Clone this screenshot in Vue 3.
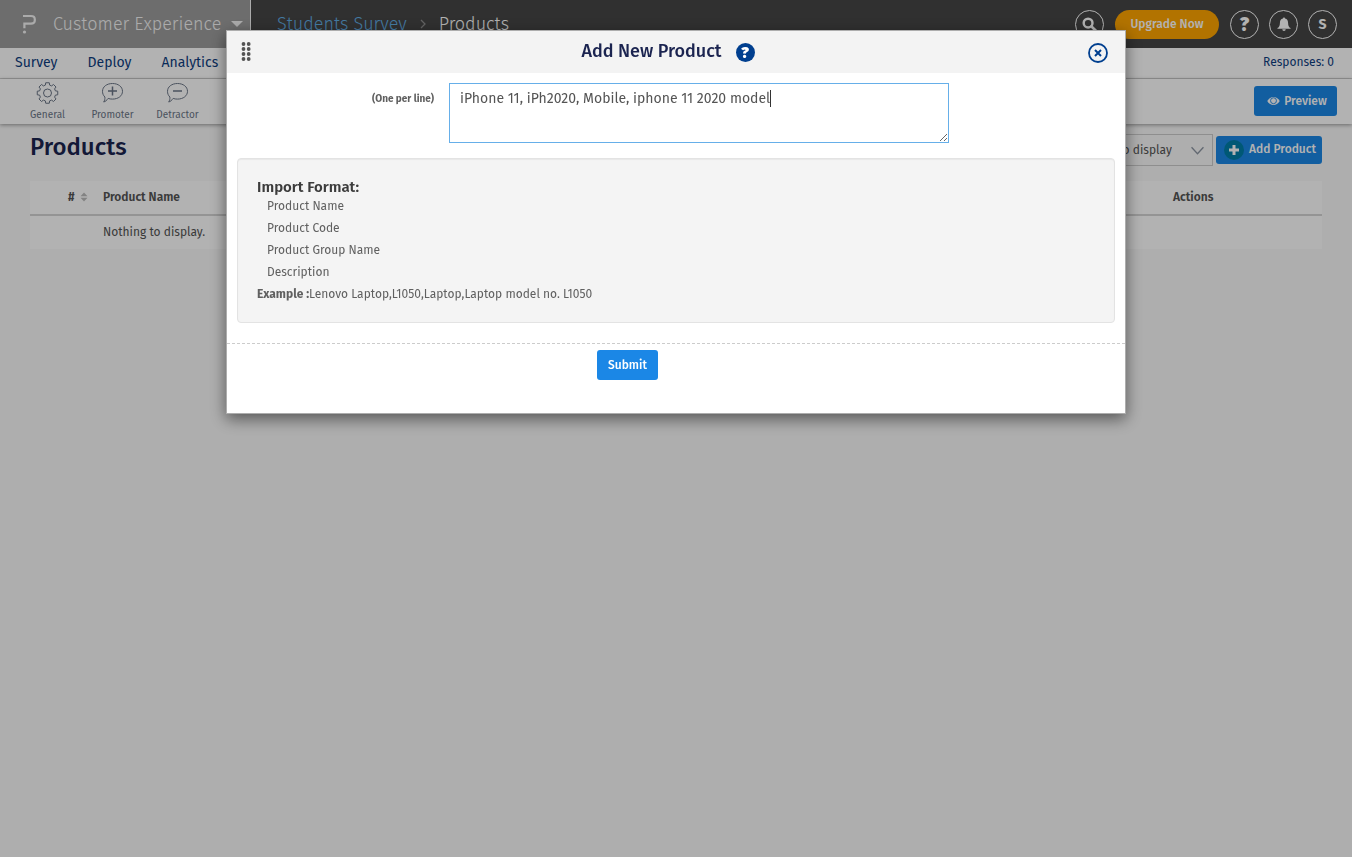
<template>
  <div class="page">
    <header class="topbar">
      <button type="button" class="brand">
        <svg class="brand-logo" viewBox="0 0 14 22" width="14" height="22">
          <path d="M1 3h8q3.800 0 3.800 3.300v1q0 3.300-3.800 3.300H2.400v4.700" fill="none" stroke="currentColor" stroke-width="2.200" />
          <circle cx="2.500" cy="19" r="1.600" fill="currentColor" />
        </svg>
        <span>Customer Experience</span>
        <span class="caret"></span>
      </button>
      <nav class="breadcrumb">
        <a href="#">Students Survey</a>
        <svg viewBox="0 0 6 10" width="6" height="10"><path d="M1 1l4 4-4 4" fill="none" stroke="#8d8d8d" stroke-width="1.300" /></svg>
        <span>Products</span>
      </nav>
      <div class="topbar-actions">
        <button type="button" class="circle" aria-label="Search">
          <svg viewBox="0 0 16 16" width="15" height="15">
            <circle cx="6.500" cy="6.500" r="4.700" fill="none" stroke="currentColor" stroke-width="2.600" />
            <path d="M10 10l4.500 4.500" stroke="currentColor" stroke-width="3" stroke-linecap="round" />
          </svg>
        </button>
        <button type="button" class="upgrade">Upgrade Now</button>
        <button type="button" class="circle help" aria-label="Help">?</button>
        <button type="button" class="circle" aria-label="Notifications">
          <svg viewBox="0 0 16 16" width="14" height="14">
            <path d="M8 0.500c0.700 0 1.200 0.500 1.200 1.300 2.500 0.600 3.500 2.500 3.500 5.200 0 3 1 4.500 2.800 5.700v0.800H0.500v-0.800c1.800-1.200 2.800-2.700 2.800-5.700 0-2.700 1-4.600 3.500-5.200 0-0.800 0.500-1.300 1.200-1.300zM6 14h4a2 2 0 0 1-4 0z" fill="currentColor" />
          </svg>
        </button>
        <button type="button" class="circle">S</button>
      </div>
    </header>

    <nav class="tabs">
      <a v-for="tab in tabs" :key="tab" href="#">{{ tab }}</a>
      <span class="responses">Responses: 0</span>
    </nav>

    <div class="toolbar">
      <button v-for="tool in tools" :key="tool.label" type="button" class="tool">
        <svg viewBox="0 0 22 22" width="23" height="22" fill="none" stroke="currentColor" stroke-width="1" stroke-linejoin="round">
          <path v-for="d in tool.paths" :key="d" :d="d" />
          <path v-if="tool.sign" :d="tool.sign" stroke-width="1.500" />
        </svg>
        <span>{{ tool.label }}</span>
      </button>
      <button type="button" class="btn preview">
        <svg viewBox="0 0 14 10" width="13" height="10">
          <path d="M0.300 5C3.500-0.800 10.500-0.800 13.700 5 10.500 10.800 3.500 10.800 0.300 5z" fill="currentColor" />
          <circle cx="7" cy="4.700" r="3.200" fill="none" stroke="#1b87e6" stroke-width="1" />
        </svg>
        Preview
      </button>
    </div>

    <main class="content">
      <div class="content-head">
        <h1>Products</h1>
        <div class="content-actions">
          <div class="select-wrap">
            <select aria-label="Filter">
              <option>Nothing to display</option>
            </select>
            <svg viewBox="0 0 12 8" width="13" height="9"><path d="M0.500 1L6 7l5.500-6" fill="none" stroke="#8d96a3" stroke-width="1.200" /></svg>
          </div>
          <button type="button" class="btn add">
            <span class="plus">
              <svg viewBox="0 0 10 10" width="10" height="10"><path d="M5 0v10M0 5h10" stroke="currentColor" stroke-width="3" /></svg>
            </span>
            <span class="add-label">Add Product</span>
          </button>
        </div>
      </div>
      <table class="products">
        <thead>
          <tr>
            <th class="col-index">
              #
              <svg viewBox="0 0 8 10" width="8" height="10"><path d="M4 0.500L7.500 4.200h-7zM4 9.500L0.500 5.800h7z" fill="#bcbcbc" /></svg>
            </th>
            <th>Product Name</th>
            <th class="col-actions">Actions</th>
          </tr>
        </thead>
        <tbody>
          <tr>
            <td></td>
            <td colspan="2">Nothing to display.</td>
          </tr>
        </tbody>
      </table>
    </main>

    <div class="overlay">
      <form class="modal" role="dialog" aria-labelledby="modal-title" @submit.prevent>
        <div class="modal-header">
          <svg class="grip" viewBox="0 0 10 20" width="10" height="20">
            <template v-for="row in 4" :key="row">
              <circle cx="2.500" :cy="row * 5 - 3" r="1.900" />
              <circle cx="7.700" :cy="row * 5 - 3" r="1.900" />
            </template>
          </svg>
          <div class="modal-title">
            <h2 id="modal-title">Add New Product</h2>
            <button type="button" class="hint" aria-label="Help">?</button>
          </div>
          <button type="button" class="close" aria-label="Close">
            <svg viewBox="0 0 20 20" width="20" height="20" fill="none" stroke="currentColor">
              <circle cx="10" cy="10" r="9" stroke-width="1.800" />
              <path d="M7 7l6 6M13 7l-6 6" stroke-width="2" />
            </svg>
          </button>
        </div>

        <div class="field">
          <label for="products-input">(One per line)</label>
          <textarea
            id="products-input"
            v-model="text"
            :class="{ 'at-end': text === initialText }"
            spellcheck="false"
          ></textarea>
        </div>

        <section class="format">
          <h3>Import Format:</h3>
          <ul>
            <li v-for="item in formatFields" :key="item">{{ item }}</li>
          </ul>
          <p><b>Example :</b>Lenovo Laptop,L1050,Laptop,Laptop model no. L1050</p>
        </section>

        <div class="modal-footer">
          <button type="submit" class="btn submit">Submit</button>
        </div>
      </form>
    </div>
  </div>
</template>

<script setup>
import { ref } from 'vue'

const bubble = 'M11 1.500c5.800 0 10 3.300 10 7.800s-4.200 7.800-10 7.800c-1.700 0-3-.2-4.300-.7C5.200 18.300 4 19.500 2.200 20c1-1.500 1.300-3 1.200-5C1.800 13.500 1 11.500 1 9.300c0-4.500 4.200-7.800 10-7.800z'

// outline of an eight-toothed gear centred in a 22x22 box
function gearPath() {
  const points = []
  for (let i = 0; i < 8; i++) {
    for (const [offset, radius] of [[-15, 8.2], [-10, 10.4], [10, 10.4], [15, 8.2]]) {
      const angle = ((i * 45 + offset) * Math.PI) / 180
      points.push(`${(11 + radius * Math.sin(angle)).toFixed(2)} ${(11 - radius * Math.cos(angle)).toFixed(2)}`)
    }
  }
  return `M${points.join('L')}z`
}

const tabs = ['Survey', 'Deploy', 'Analytics']

const tools = [
  { label: 'General', paths: [gearPath(), 'M15 11a4 4 0 1 1-8 0 4 4 0 0 1 8 0z'] },
  { label: 'Promoter', paths: [bubble], sign: 'M11 4.500v9M6.500 9h9' },
  { label: 'Detractor', paths: [bubble], sign: 'M6.500 9h9' }
]

const formatFields = ['Product Name', 'Product Code', 'Product Group Name', 'Description']

const initialText = 'iPhone 11, iPh2020, Mobile, iphone 11 2020 model'
const text = ref(initialText)
</script>

<style>
body {
  margin: 0;
  background: #f9f9f9;
}
</style>

<style scoped>
.page {
  min-height: 100vh;
  font-family: 'Fira Sans', Roboto, sans-serif;
  font-size: 12px;
  color: #545454;
}

button,
select,
textarea {
  font-family: inherit;
  box-sizing: border-box;
}

button {
  border: none;
  padding: 0;
  background: none;
  color: inherit;
}

a {
  text-decoration: none;
}

svg {
  display: block;
  flex: none;
}

.topbar {
  display: flex;
  height: 48px;
  background: #454545;
  color: #fff;
}

.brand {
  display: flex;
  align-items: center;
  width: 251px;
  padding: 0 7px 0 22px;
  border-right: 1px solid #f5f5f5;
  background: #9d9d9d;
  color: #f5f5f5;
  font-size: 18px;
  font-weight: 300;
  white-space: nowrap;
}

.brand-logo {
  margin-right: 17px;
}

.caret {
  margin-left: auto;
  border: 6px solid transparent;
  border-top-color: #f5f5f5;
  border-bottom: none;
}

.breadcrumb {
  display: flex;
  align-items: center;
  gap: 13px;
  padding-left: 26px;
  font-size: 18px;
  font-weight: 300;
}

.breadcrumb a {
  color: #62b0e8;
}

.topbar-actions {
  display: flex;
  align-items: center;
  gap: 10px;
  margin-left: auto;
  padding-right: 15px;
}

.circle {
  display: flex;
  flex: none;
  align-items: center;
  justify-content: center;
  width: 29px;
  height: 29px;
  border: 1px solid #fff;
  border-radius: 50%;
  font-size: 14px;
  font-weight: 700;
}

.help {
  font-size: 19px;
  font-weight: 900;
}

.upgrade {
  width: 104px;
  height: 29px;
  margin: 0 1px;
  padding-bottom: 1px;
  border-radius: 15px;
  background: #ffa500;
  font-size: 12px;
  font-weight: 500;
}

.tabs {
  display: flex;
  align-items: center;
  gap: 30px;
  height: 28px;
  padding: 0 18px 2px 15px;
  border-bottom: 1px solid #d5d5d5;
  background: #fff;
  font-size: 14px;
}

.tabs a {
  color: #0d3d80;
}

.responses {
  margin-left: auto;
  color: #0d3d80;
  font-size: 12px;
}

.toolbar {
  display: flex;
  align-items: center;
  height: 43px;
  padding: 0 15px 2px;
  background: #fff;
  box-shadow: 0 1px 4px rgba(0, 0, 0, 0.4);
}

.tool {
  display: flex;
  flex-direction: column;
  align-items: center;
  gap: 5px;
  width: 65px;
  padding-top: 2px;
  color: #6b7687;
  font-size: 10px;
}

.btn {
  border-radius: 3px;
  background: #1b87e6;
  color: #fff;
  font-size: 12px;
  font-weight: 500;
}

.preview {
  display: flex;
  align-items: center;
  justify-content: center;
  gap: 4px;
  width: 83px;
  height: 30px;
  margin-left: auto;
  padding-left: 3px;
}

.content {
  padding: 10px 30px;
}

.content-head {
  display: flex;
  align-items: flex-start;
  justify-content: space-between;
  height: 47px;
}

h1 {
  margin: 0;
  color: #1b2450;
  font-size: 24px;
  line-height: 26px;
  font-weight: 500;
}

.content-actions {
  display: flex;
  align-items: center;
  gap: 3px;
}

.select-wrap {
  display: grid;
  align-items: center;
}

.select-wrap select,
.select-wrap svg {
  grid-area: 1 / 1;
}

.select-wrap svg {
  justify-self: end;
  margin-right: 9px;
  pointer-events: none;
}

.select-wrap select {
  height: 32px;
  padding: 0 40px 0 10px;
  border: 1px solid #ccc;
  appearance: none;
  background: transparent;
  color: #545454;
  font-size: 12px;
}

.add {
  display: flex;
  align-items: center;
  gap: 5px;
  height: 28px;
  padding: 0 6px 0 8px;
}

.add-label {
  padding-bottom: 2px;
}

.plus {
  display: flex;
  align-items: center;
  justify-content: center;
  width: 20px;
  height: 20px;
  border-radius: 50%;
  background: #007fa8;
}

.products {
  width: 100%;
  border-collapse: collapse;
  background: #fff;
  table-layout: fixed;
}

.products th,
.products td {
  height: 31px;
  padding: 0 10px 2px;
  text-align: left;
}

.products th {
  border-bottom: 2px solid #d5d5d5;
  font-weight: 600;
}

.products .col-index {
  width: 63px;
  padding: 0 5px 2px 38px;
  box-sizing: border-box;
  white-space: nowrap;
}

.col-index svg {
  display: inline-block;
  margin-left: 2px;
  vertical-align: middle;
}

.products .col-actions {
  width: 139px;
}

.overlay {
  position: fixed;
  inset: 0;
  padding: 30px 20px;
  background: rgba(0, 0, 0, 0.3);
}

.modal {
  max-width: 898px;
  margin: 0 auto;
  border: 1px solid #adadad;
  background: #fff;
  box-shadow: 0 5px 15px rgba(0, 0, 0, 0.5);
  color: #606060;
}

.modal-header {
  display: flex;
  align-items: center;
  height: 42px;
  padding: 0 17px 0 14px;
  background: #f3f3f3;
}

.grip {
  fill: #545454;
}

.modal-title {
  display: flex;
  flex: 1;
  align-items: center;
  justify-content: center;
  gap: 14px;
  padding-right: 3px;
}

h2 {
  margin: 0 0 2px;
  color: #1b2450;
  font-size: 18px;
  font-weight: 500;
}

.hint {
  width: 19px;
  height: 19px;
  border-radius: 50%;
  background: #003f8f;
  color: #fff;
  font-size: 16px;
  line-height: 19px;
  font-weight: 900;
}

.close {
  padding-top: 2px;
  color: #003f8f;
}

.field {
  display: flex;
  gap: 15px;
  padding: 10px 10px 15px 0;
}

label {
  width: 207px;
  padding-top: 10px;
  text-align: right;
  font-size: 10px;
  font-weight: 700;
}

textarea {
  width: 500px;
  height: 60px;
  padding: 6px 10px;
  border: 1px solid #66afe9;
  outline: none;
  color: #545454;
  font-size: 14px;
  line-height: 18px;
}

/* insertion mark after the last character */
.at-end {
  background: linear-gradient(#333, #333) 320px 6px / 1px 17px no-repeat;
}

.format {
  margin: 0 10px 20px;
  padding: 20px 19px 17px;
  border: 1px solid #e3e3e3;
  border-radius: 4px;
  background: #f4f4f4;
  box-shadow: inset 0 1px 1px rgba(0, 0, 0, 0.05);
  line-height: 22px;
}

h3 {
  margin: 0;
  color: #3c3c3c;
  font-size: 15px;
  line-height: 16px;
  font-weight: 600;
}

ul {
  margin: 0;
  padding: 0 0 0 10px;
  list-style: none;
}

p {
  margin: 0;
}

.modal-footer {
  padding: 6px 0 33px 370px;
  border-top: 1px dashed #ccc;
}

.submit {
  width: 61px;
  height: 30px;
  padding-bottom: 1px;
}
</style>
